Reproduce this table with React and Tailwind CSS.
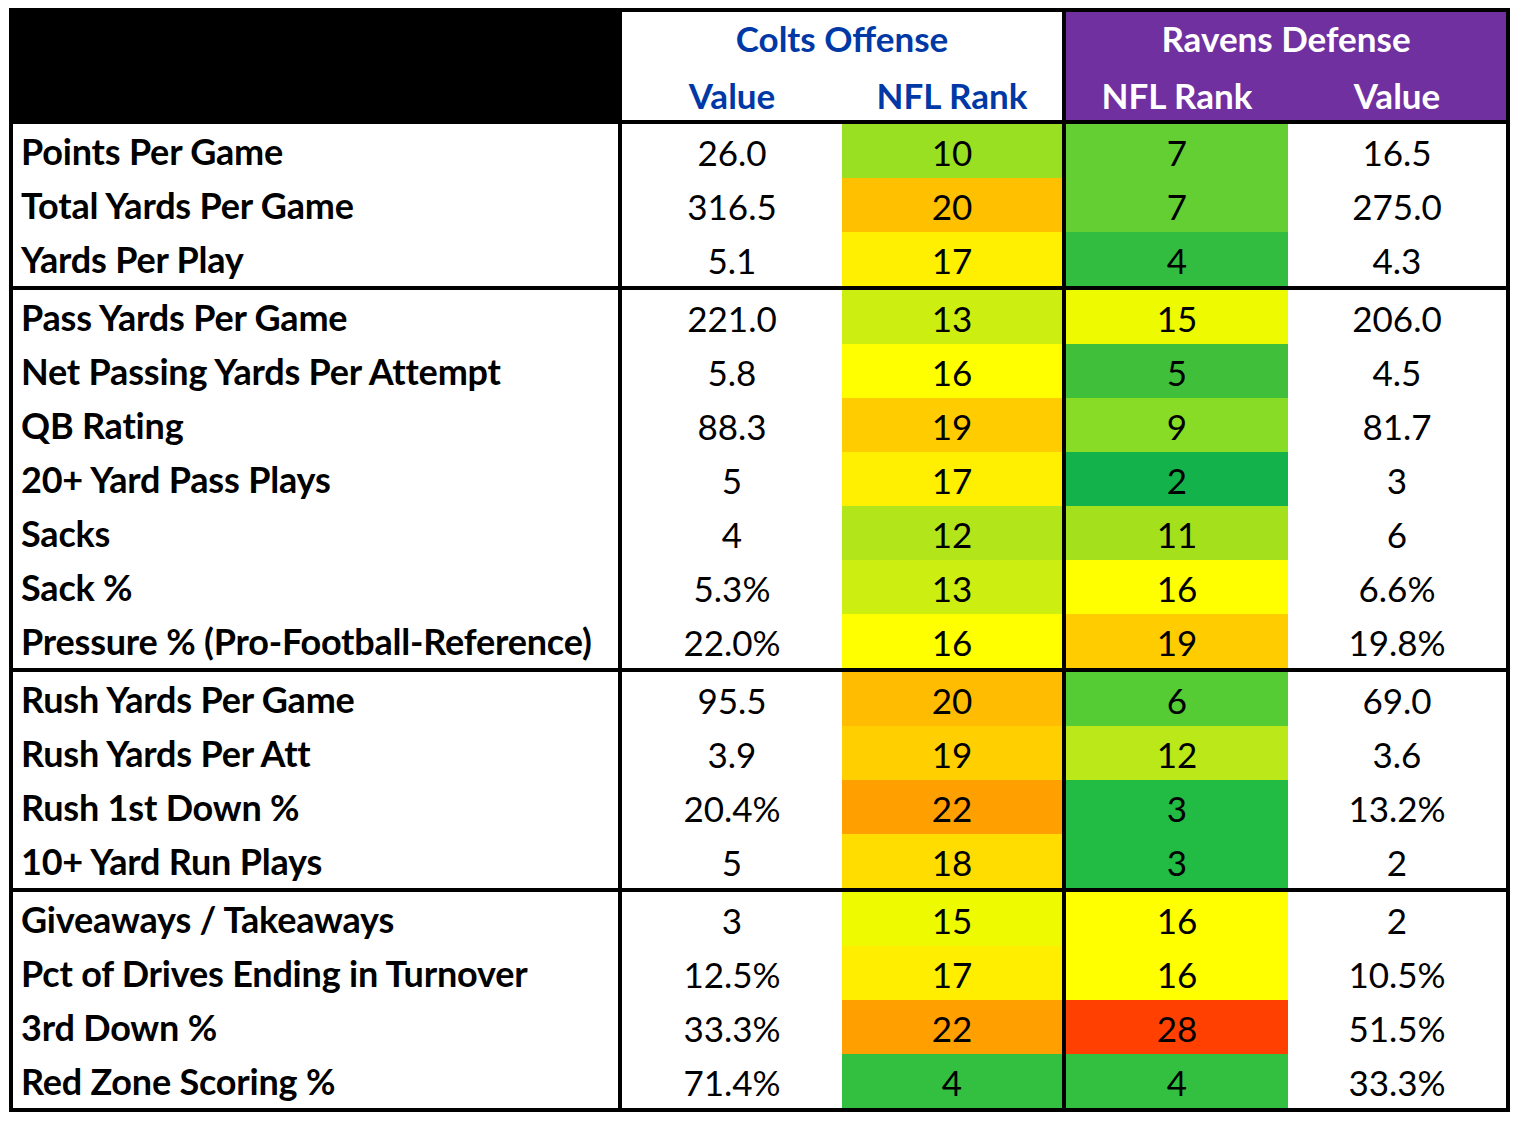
import React from "react";

const sections = [
  [
    ["Points Per Game", "26.0", "10", "#99E022", "7", "#63CF32", "16.5"],
    ["Total Yards Per Game", "316.5", "20", "#FFC000", "7", "#63CF32", "275.0"],
    ["Yards Per Play", "5.1", "17", "#FFEF00", "4", "#33BD40", "4.3"],
  ],
  [
    ["Pass Yards Per Game", "221.0", "13", "#CCEE11", "15", "#EEFA00", "206.0"],
    ["Net Passing Yards Per Attempt", "5.8", "16", "#FFFF00", "5", "#40C03A", "4.5"],
    ["QB Rating", "88.3", "19", "#FFCC00", "9", "#88DC25", "81.7"],
    ["20+ Yard Pass Plays", "5", "17", "#FFEF00", "2", "#14B24A", "3"],
    ["Sacks", "4", "12", "#B2E51A", "11", "#A5E01C", "6"],
    ["Sack %", "5.3%", "13", "#CCEE11", "16", "#FFFF00", "6.6%"],
    ["Pressure % (Pro-Football-Reference)", "22.0%", "16", "#FFFF00", "19", "#FFCC00", "19.8%"],
  ],
  [
    ["Rush Yards Per Game", "95.5", "20", "#FFBC00", "6", "#55CC33", "69.0"],
    ["Rush Yards Per Att", "3.9", "19", "#FFCF00", "12", "#BBE818", "3.6"],
    ["Rush 1st Down %", "20.4%", "22", "#FF9F00", "3", "#22BB44", "13.2%"],
    ["10+ Yard Run Plays", "5", "18", "#FFDD00", "3", "#22BB44", "2"],
  ],
  [
    ["Giveaways / Takeaways", "3", "15", "#EEFB00", "16", "#FFFF00", "2"],
    ["Pct of Drives Ending in Turnover", "12.5%", "17", "#FFEE00", "16", "#FFFF00", "10.5%"],
    ["3rd Down %", "33.3%", "22", "#FF9F00", "28", "#FF4000", "51.5%"],
    ["Red Zone Scoring %", "71.4%", "4", "#33BF40", "4", "#33BF40", "33.3%"],
  ],
];

function Row({ r }) {
  const [label, cv, cr, cc, rr, rc, rv] = r;
  return (
    <div className="flex h-[54px]">
      <div className="w-[609px] border-r-4 border-black flex items-center pl-[8px] font-bold text-[36px] tracking-[-0.2px]">
        {label}
      </div>
      <div className="w-[220px] flex items-center justify-center pt-[2px]">{cv}</div>
      <div
        className="w-[224px] border-r-4 border-black flex items-center justify-center pt-[2px]"
        style={{ backgroundColor: cc }}
      >
        {cr}
      </div>
      <div
        className="w-[222px] flex items-center justify-center pt-[2px]"
        style={{ backgroundColor: rc }}
      >
        {rr}
      </div>
      <div className="w-[218px] flex items-center justify-center pt-[2px]">{rv}</div>
    </div>
  );
}

export default function App() {
  return (
    <div className="min-h-[1126px] bg-white pt-[8px] pl-[9px]">
      <div
        className="w-[1501px] border-4 border-black text-black text-[35px] leading-none"
        style={{ fontFamily: "Lato, 'Liberation Sans', sans-serif" }}
      >
        <div className="flex h-[112px] border-b-4 border-black">
          <div className="w-[609px] bg-black" />
          <div className="w-[440px] flex flex-col text-[#0039A6] font-bold">
            <div className="h-[54px] flex items-center justify-center pb-[2px]">Colts Offense</div>
            <div className="h-[54px] flex">
              <div className="w-[220px] flex items-center justify-center pt-[4px]">Value</div>
              <div className="w-[220px] flex items-center justify-center pt-[4px]">NFL Rank</div>
            </div>
          </div>
          <div className="w-[4px] bg-black" />
          <div className="w-[440px] flex flex-col bg-[#7030A0] text-white font-bold">
            <div className="h-[54px] flex items-center justify-center pb-[2px]">Ravens Defense</div>
            <div className="h-[54px] flex">
              <div className="w-[222px] flex items-center justify-center pt-[4px]">NFL Rank</div>
              <div className="w-[218px] flex items-center justify-center pt-[4px]">Value</div>
            </div>
          </div>
        </div>
        {sections.map((sec, i) => (
          <div
            key={i}
            className={i < sections.length - 1 ? "border-b-4 border-black" : ""}
          >
            {sec.map((r) => (
              <Row key={r[0]} r={r} />
            ))}
          </div>
        ))}
      </div>
    </div>
  );
}
